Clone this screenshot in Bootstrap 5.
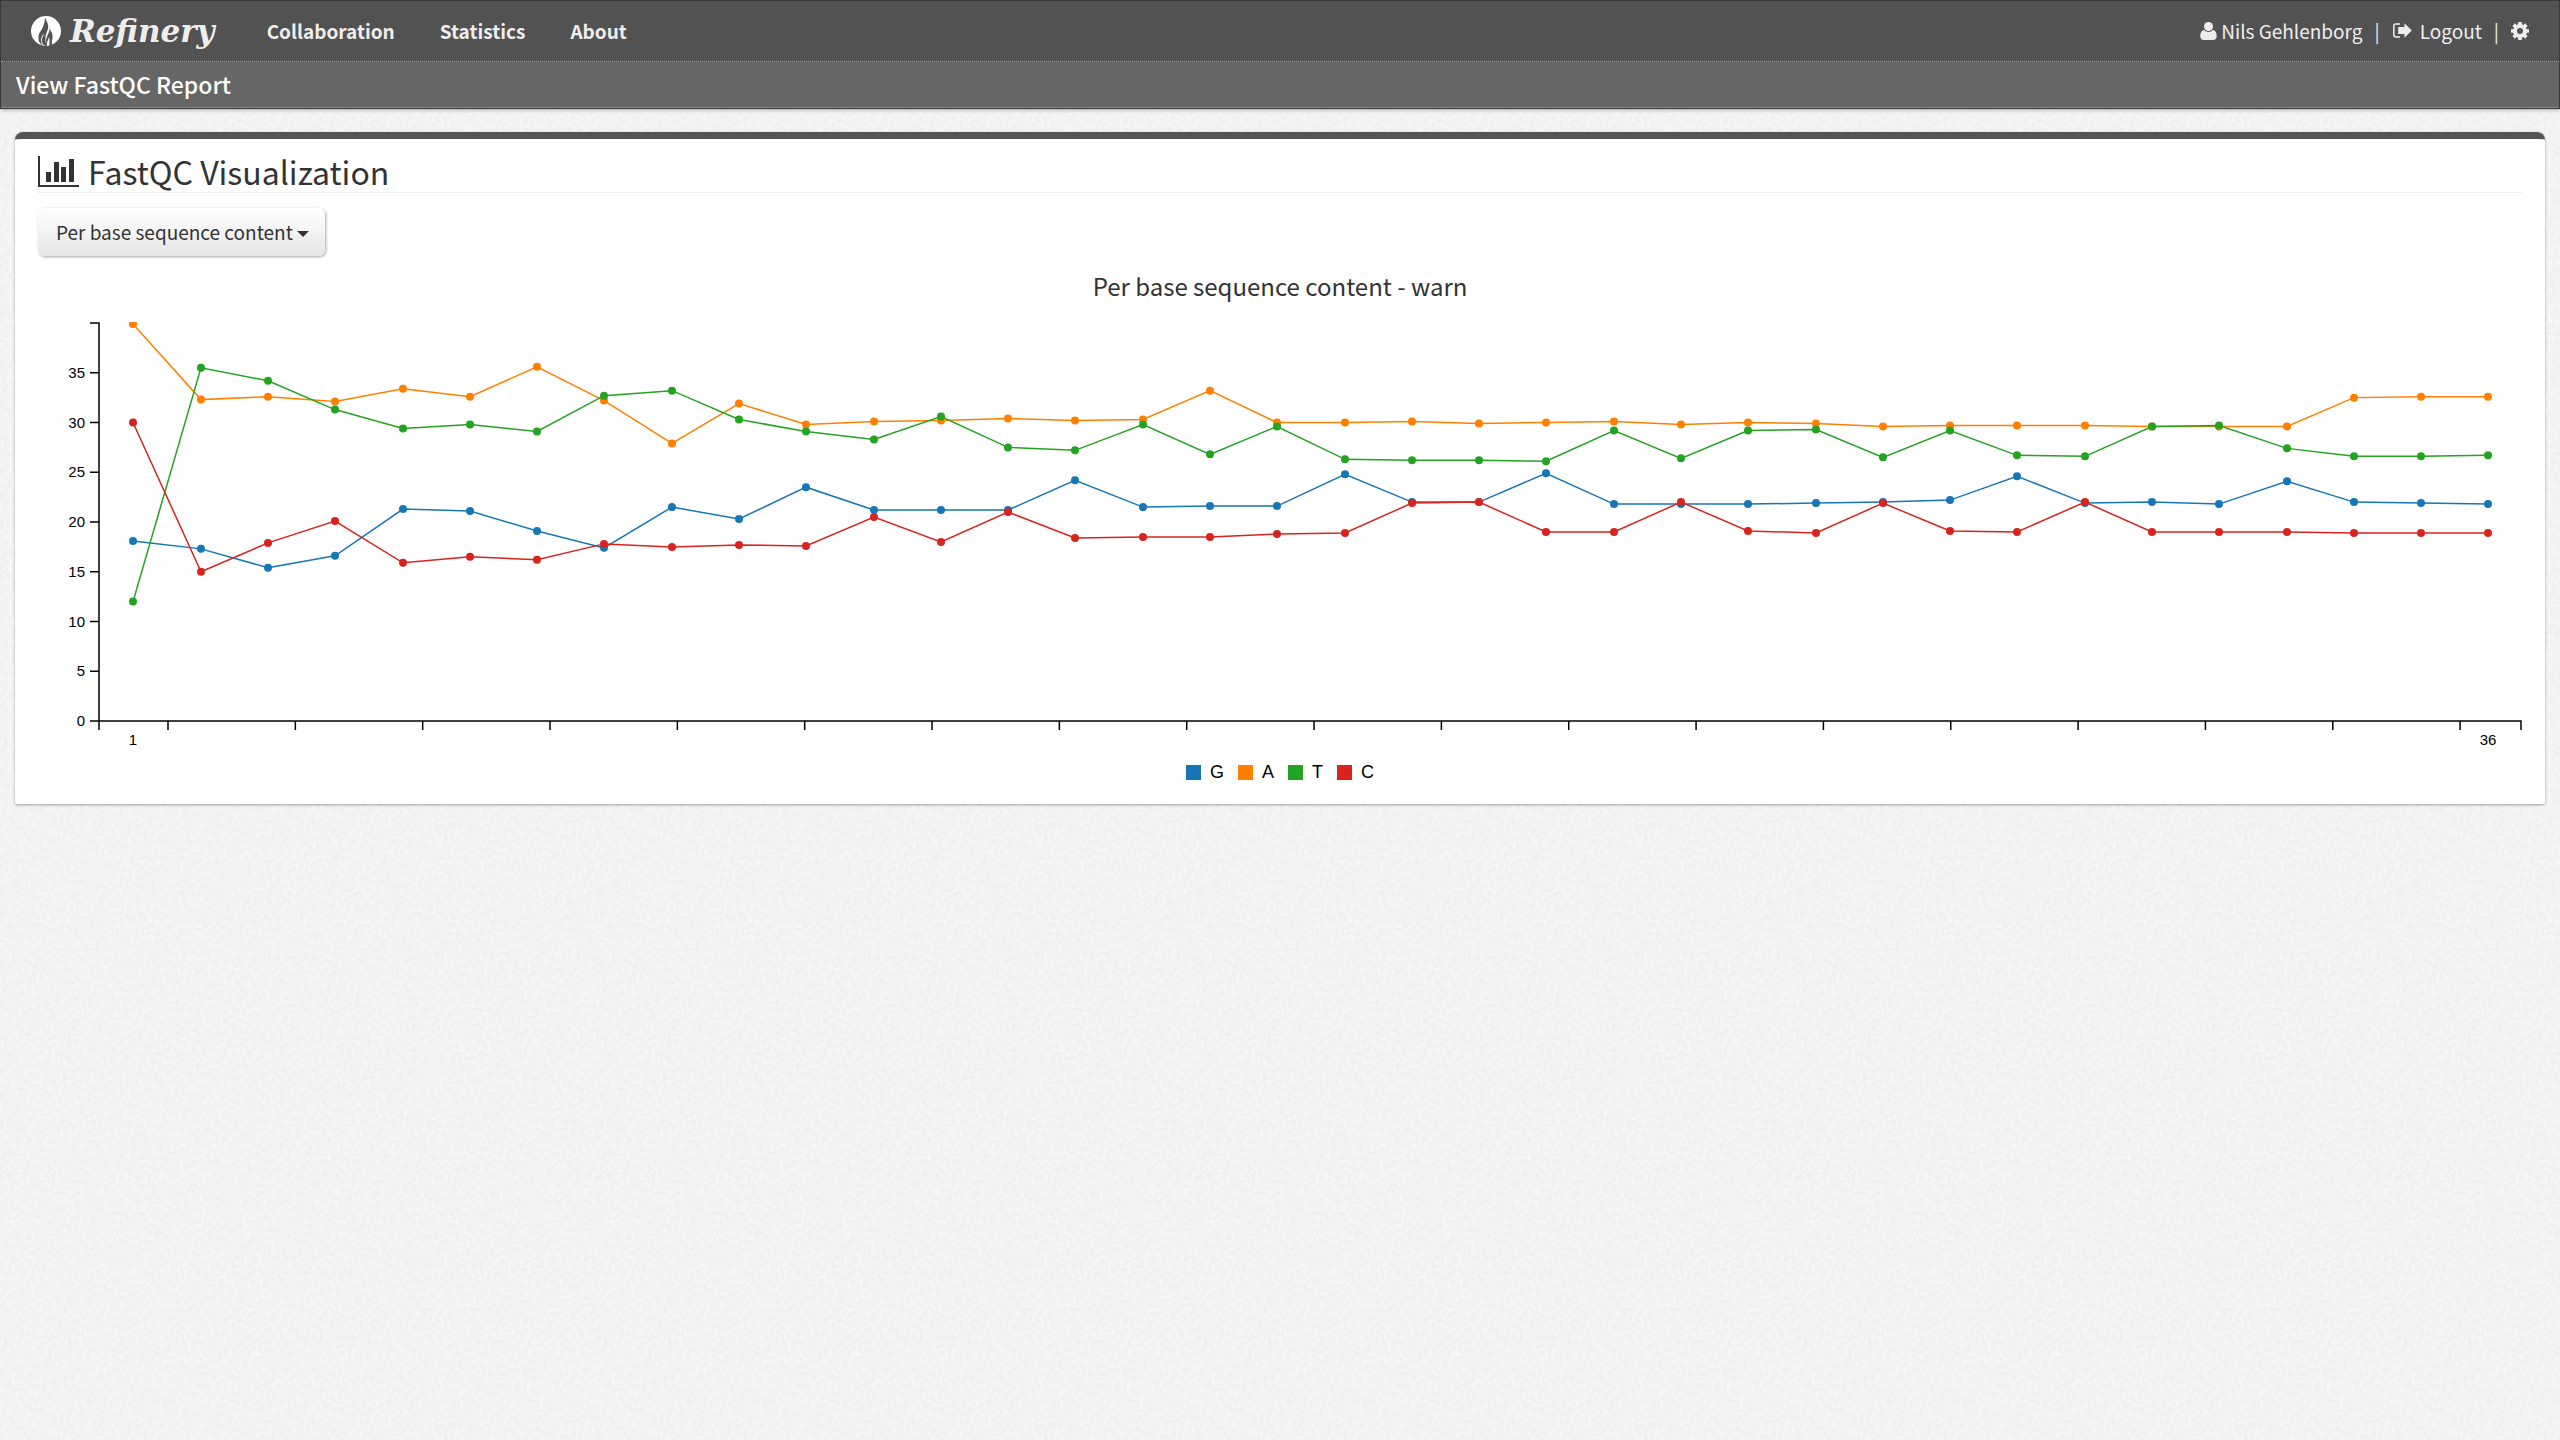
<!DOCTYPE html>
<html lang="en">
<head>
<meta charset="utf-8">
<meta name="viewport" content="width=device-width, initial-scale=1">
<title>Refinery - View FastQC Report</title>
<link href="https://cdn.jsdelivr.net/npm/bootstrap@5.3.0/dist/css/bootstrap.min.css" rel="stylesheet">
<style>
  body {
    font-family: "Noto Sans CJK SC", "Noto Sans", sans-serif;
    font-size: 19px;
    line-height: 30px;
    color: #333;
    background-color: #f7f7f7;
    background-image: url("data:image/svg+xml,%3Csvg xmlns='http://www.w3.org/2000/svg' width='300' height='300'%3E%3Cfilter id='n'%3E%3CfeTurbulence type='fractalNoise' baseFrequency='.25' numOctaves='2' stitchTiles='stitch'/%3E%3CfeColorMatrix values='0 0 0 0 0 0 0 0 0 0 0 0 0 0 0 .06 0 0 0 -.015'/%3E%3C/filter%3E%3Crect width='300' height='300' filter='url(%23n)'/%3E%3C/svg%3E");
  }
  .site-header {
    border: 1px solid #3a3a3a;
    box-shadow: 0 1px 4px rgba(0, 0, 0, .3);
    background: #666;
  }
  .main-bar {
    background: #525252;
    border-bottom: 1px dotted #999;
    min-height: 61px;
    padding: 0 30px 1px 29px;
  }
  .main-bar a { color: #eee; text-decoration: none; }
  .brand-name {
    font: italic bold 31px/36px "DejaVu Serif", serif;
    margin-left: 8px;
  }
  .main-links { margin-left: 52px; gap: 45px; font-weight: 700; }
  .user-links { color: #eee; }
  .page-bar {
    color: #fff;
    font-size: 23px;
    font-weight: 500;
    line-height: 45px;
    padding: 0 15px;
    margin: 0;
    border-bottom: 1px solid #888;
  }
  .page-body { padding: 23px 15px; }
  .panel-box {
    background: #fff;
    border-top: 7px solid #555;
    border-radius: 8px 8px 2px 2px;
    box-shadow: 0 1px 3px rgba(0, 0, 0, .35);
    padding: 12px 23px 18px;
  }
  .panel-title {
    font-size: 32px;
    font-weight: 400;
    line-height: 41px;
    border-bottom: 1px solid #eee;
    margin: 0 0 15px;
    gap: 8px;
  }
  .plot-picker {
    font-size: 19px;
    line-height: 30px;
    color: #333;
    padding: 9px 16px 9px 18px;
    border: 0;
    border-radius: 6px;
    background: linear-gradient(#fff, #e6e6e6);
    box-shadow: 1px 1px 3px rgba(0, 0, 0, .35);
  }
  .plot-picker::after { border-width: 6px; border-bottom: 0; margin-left: 4px; vertical-align: 3px; }
  .plot-title { font-size: 24px; font-weight: 400; line-height: 36px; margin: 12px 0 10px; }
  .plot { width: 100%; height: 436px; font: 15px "Liberation Sans", Arial, sans-serif; }
  .legend-list { font: 18px/27px "Liberation Sans", Arial, sans-serif; color: #000; gap: 14px; margin: 9px 0 0; }
  .legend-list li { gap: 9px; }
  .swatch { width: 15px; height: 15px; }
  .swatch-g { background: #1776b6; }
  .swatch-a { background: #ff8000; }
  .swatch-t { background: #24a222; }
  .swatch-c { background: #d8241f; }
</style>
</head>
<body>
<header class="site-header">
  <nav class="main-bar d-flex align-items-center">
    <a class="d-flex align-items-center" href="#">
      <svg width="32" height="32" viewBox="0 0 32 32" aria-hidden="true">
        <circle cx="16" cy="16" r="15" fill="#fff"/>
        <path fill="#525252" d="M15 2.500C17 7 19 10 18 13.500C17.600 16 16 18 15.600 21C15.200 25 15.500 28 16 31L12 30C9 28 8 25 8.500 21C9 16.500 14.500 14 15 2.500ZM19.500 12.500C20 16 22.500 17 22.600 21.500C22.700 24 21.500 25.500 22 30L19.200 31C19.500 27 20 25 19 22C18.500 25 16.800 27 16.800 31L16 31C15.500 27 16 23 17.600 20C19 17.500 19.800 15.500 19.500 12.500Z"/>
        <path d="M13.600 31C10.500 27 11 23 13.500 19.500M18 31C17.500 28 17.800 26 18.500 25" fill="none" stroke="#fff" stroke-width="1"/>
      </svg>
      <span class="brand-name">Refinery</span>
    </a>
    <div class="main-links d-flex">
      <a href="#">Collaboration</a>
      <a href="#">Statistics</a>
      <a href="#">About</a>
    </div>
    <div class="user-links d-flex align-items-center ms-auto">
      <a class="d-flex align-items-center" href="#">
        <svg class="me-1" width="17" height="18" viewBox="0 0 17 18" fill="currentColor" aria-hidden="true"><circle cx="8.500" cy="4.500" r="4.500"/><path d="M4 8C1.500 8.300.3 11 .3 14.500.3 16.800 1.700 18 3.700 18H13.300C15.300 18 16.700 16.800 16.700 14.500 16.700 11 15.500 8.300 13 8 11.800 9.200 10.300 9.900 8.500 9.900S5.200 9.200 4 8Z"/></svg>
        Nils Gehlenborg</a>
      <span class="mx-2 px-1">|</span>
      <a class="d-flex align-items-center" href="#">
        <svg class="me-2" width="20" height="18" viewBox="0 0 20 18" aria-hidden="true"><path d="M8 2H4Q1.800 2 1.800 4.200V12.800Q1.800 15 4 15H8" fill="none" stroke="currentColor" stroke-width="1.500"/><path fill="currentColor" d="M12.500 1.200 19.800 8.500 12.500 15.800V12H6.200V5H12.500Z"/></svg>
        Logout</a>
      <span class="mx-2 px-1">|</span>
      <a class="d-flex align-items-center" href="#" aria-label="Settings">
        <svg width="18" height="18" viewBox="-9 -9 18 18" aria-hidden="true"><circle r="5" fill="none" stroke="currentColor" stroke-width="4"/><g stroke="currentColor" stroke-width="3.600"><path d="M0-9V-5M0 9V5M-9 0H-5M9 0H5"/><path transform="rotate(45)" d="M0-9V-5M0 9V5M-9 0H-5M9 0H5"/></g></svg>
      </a>
    </div>
  </nav>
  <h1 class="page-bar">View FastQC Report</h1>
</header>

<main class="page-body">
  <section class="panel-box">
    <h2 class="panel-title d-flex align-items-center">
      <svg width="42" height="32" viewBox="0 0 42 32" fill="currentColor" aria-hidden="true"><path d="M0 0H2V29H41V31H0ZM8 16H13V26H8ZM16 6H21V26H16ZM23 11H28V26H23ZM31 3H36V26H31Z"/></svg>
      FastQC Visualization
    </h2>
    <div class="dropdown">
      <button class="btn plot-picker dropdown-toggle" type="button" data-bs-toggle="dropdown" aria-expanded="false">Per base sequence content</button>
    </div>
    <h3 class="plot-title text-center">Per base sequence content - warn</h3>
    <svg class="plot d-block" id="plot" role="img" aria-label="Line chart of base content per position"></svg>
    <ul class="legend-list list-unstyled d-flex justify-content-center">
      <li class="d-flex align-items-center"><span class="swatch swatch-g"></span>G</li>
      <li class="d-flex align-items-center"><span class="swatch swatch-a"></span>A</li>
      <li class="d-flex align-items-center"><span class="swatch swatch-t"></span>T</li>
      <li class="d-flex align-items-center"><span class="swatch swatch-c"></span>C</li>
    </ul>
  </section>
</main>

<script src="https://cdn.jsdelivr.net/npm/bootstrap@5.3.0/dist/js/bootstrap.bundle.min.js"></script>
<script>
const series = [
  { color: '#1776b6', values: [18.1,17.3,15.4,16.6,21.3,21.1,19.1,17.4,21.5,20.3,23.5,21.2,21.2,21.2,24.2,21.5,21.6,21.6,24.8,22,22,24.9,21.8,21.8,21.8,21.9,22,22.2,24.6,21.9,22,21.8,24.1,22,21.9,21.8] },
  { color: '#ff8000', values: [39.9,32.3,32.6,32.1,33.4,32.6,35.6,32.2,27.9,31.9,29.8,30.1,30.2,30.4,30.2,30.3,33.2,30,30,30.1,29.9,30,30.1,29.8,30,29.9,29.6,29.7,29.7,29.7,29.6,29.6,29.6,32.5,32.6,32.6] },
  { color: '#24a222', values: [12,35.5,34.2,31.3,29.4,29.8,29.1,32.7,33.2,30.3,29.1,28.3,30.6,27.5,27.2,29.8,26.8,29.6,26.3,26.2,26.2,26.1,29.2,26.4,29.2,29.3,26.5,29.2,26.7,26.6,29.6,29.7,27.4,26.6,26.6,26.7] },
  { color: '#d8241f', values: [30,15,17.9,20.1,15.9,16.5,16.2,17.8,17.5,17.7,17.6,20.5,18,21,18.4,18.5,18.5,18.8,18.9,21.9,22,19,19,22,19.1,18.9,21.9,19.1,19,22,19,19,19,18.9,18.9,18.9] }
];
const plot = document.getElementById('plot');

function draw() {
  const left = 61, right = plot.clientWidth - 1, top = 9, bottom = 407;
  const y = v => bottom - v * (bottom - top) / 40;
  const first = left + 34, last = right - 33;
  const x = i => Math.ceil(first + i * (last - first) / 35);
  let axes = `M${left - 9} ${top}H${left}V${bottom}H${right}v9M${left} ${bottom}v9`;
  let labels = '';
  for (let v = 0; v < 40; v += 5) {
    axes += `M${left - 9} ${y(v)}h9`;
    labels += `<text x="${left - 14}" y="${y(v) + 5}" text-anchor="end">${v}</text>`;
  }
  const step = (right - left) / 19.02;
  for (let n = 0; n < 19; n++) axes += `M${left + 69 + n * step} ${bottom}v9`;
  labels += `<text x="${x(0)}" y="${bottom + 24}" text-anchor="middle">1</text>`;
  labels += `<text x="${x(35)}" y="${bottom + 24}" text-anchor="middle">36</text>`;
  const lines = series.map(s =>
    `<polyline fill="none" stroke="${s.color}" stroke-width="1.500" points="${s.values.map((v, i) => x(i) + ',' + y(v)).join(' ')}"/>`).join('');
  const dots = series.map(s =>
    `<g fill="${s.color}">${s.values.map((v, i) => `<circle cx="${x(i)}" cy="${y(v)}" r="4"/>`).join('')}</g>`).join('');
  plot.innerHTML = `<clipPath id="area"><rect x="${left}" y="${top - 1}" width="${right - left}" height="${bottom - top}"/></clipPath>
    <path d="${axes}" fill="none" stroke="#000" stroke-width="1.500"/>${labels}<g clip-path="url(#area)">${lines}${dots}</g>`;
}
draw();
window.addEventListener('resize', draw);
</script>
</body>
</html>
